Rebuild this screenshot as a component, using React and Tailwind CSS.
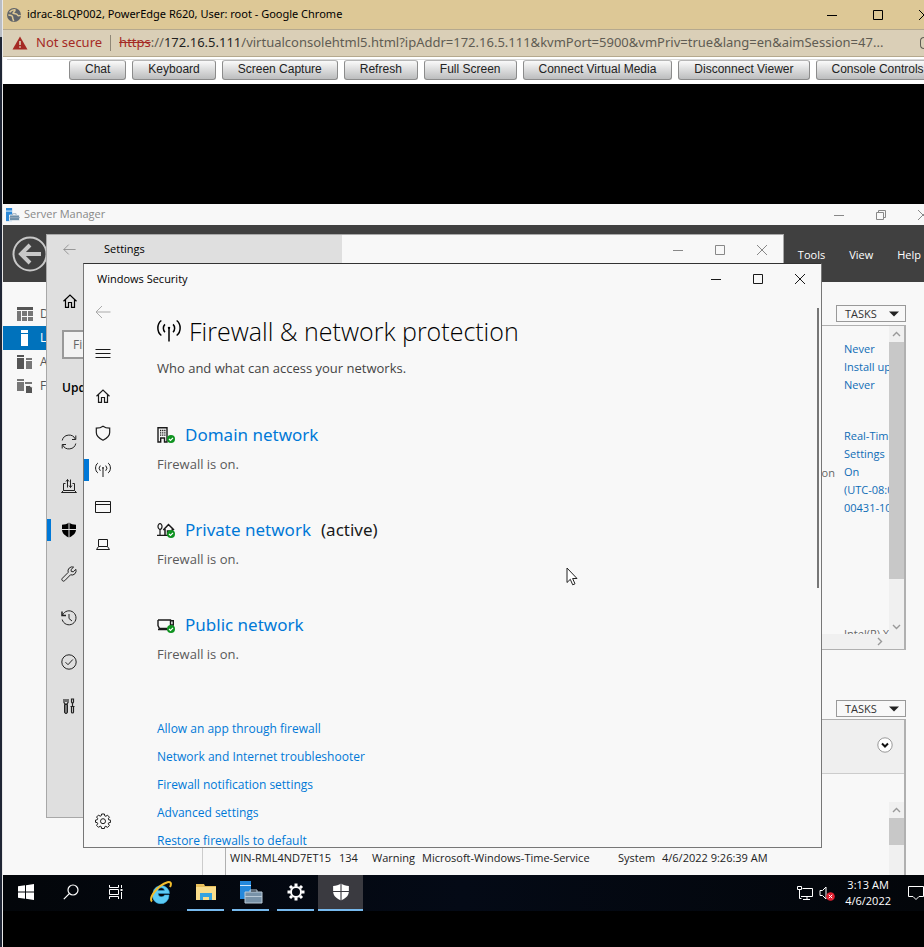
import React from "react";

const UI = "font-['Open_Sans','Noto_Sans',sans-serif]";

function Svg({ size = 16, box = 16, className = "", children, sw = 1 }) {
  return (
    <svg width={size} height={size} viewBox={`0 0 ${box} ${box}`} fill="none" stroke="currentColor" strokeWidth={sw} className={`shrink-0 ${className}`} aria-hidden="true">
      {children}
    </svg>
  );
}

const MinimizeIcon = () => <Svg size={12} box={12}><path d="M1 6.5h10" /></Svg>;
const MaximizeIcon = () => <Svg size={12} box={12}><path d="M1.5 1.5h9v9h-9z" /></Svg>;
const RestoreIcon = () => <Svg size={12} box={12}><path d="M1.5 3.5h7v7h-7zM3.5 3.5v-2h7v7h-2" /></Svg>;
const CloseIcon = () => <Svg size={12} box={12}><path d="M1 1l10 10M11 1L1 11" /></Svg>;
const BackIcon = ({ size = 16 }) => <Svg size={size}><path d="M15.5 8H1M7 2L1 8l6 6" /></Svg>;
const MenuIcon = () => <Svg><path d="M.5 4.500h15M.5 8.500h15M.5 12.500h15" /></Svg>;
const HomeIcon = () => <Svg sw={1.2}><path d="M1.500 8.200L8 2l6.500 6.200M3.500 6.500V14.400H6.500V9.500H9.500V14.400H12.500V6.500" /></Svg>;
const ShieldIcon = () => <Svg sw={1.2}><path d="M8 1.200C6.200 2.600 3.800 3.200 1.300 3.200V7.500C1.300 11 4.500 13.500 8 15.200C11.500 13.500 14.700 11 14.700 7.500V3.200C12.200 3.200 9.800 2.600 8 1.200z" /></Svg>;
const AntennaIcon = ({ size = 16 }) => (
  <Svg size={size}>
    <path d="M8 5.500v9.500M5.300 8.800a3.700 3.700 0 010-5.200M10.700 8.800a3.700 3.700 0 000-5.200M2.900 11C-.2 8.700-.2 3.300 2.900 1M13.100 11c3.100-2.300 3.100-7.700 0-10" />
    <circle cx="8" cy="5.900" r=".8" fill="currentColor" stroke="none" />
  </Svg>
);
const AppWindowIcon = () => <Svg><path d="M.5 2.500h15v11H.5zM.5 5.500h15" /></Svg>;
const LaptopIcon = () => <Svg><path d="M3.500 3.500h9v7h-9zM3.500 10.500L1.500 13.500h13L12.500 10.500" /></Svg>;
const GearIcon = () => (
  <Svg size={16}>
    <path d="M6.600 1h2.800l.4 1.900 1 .4 1.700-1.100 1.900 1.900-1.100 1.700.4 1 1.900.4v2.200l-1.900.4-.4 1 1.100 1.700-1.900 1.900-1.700-1.100-1 .4L9.400 15.500H6.600l-.4-1.900-1-.4-1.700 1.100-1.900-1.900 1.100-1.700-.4-1L.5 9.300V7.100l1.800-.4.4-1L1.600 4l1.900-1.900 1.700 1.100 1-.4z" />
    <circle cx="8" cy="8.200" r="2.500" />
  </Svg>
);
const SyncIcon = () => <Svg><path d="M1.200 6.500A7 7 0 0114.300 5M14.800 9.500A7 7 0 011.700 11M14.800 1.500V5.500H11M1.200 14.500V10.500H5" /></Svg>;
const DeliveryIcon = () => <Svg><path d="M4.500 5.500H2.500V12.500H13.500V5.500H11.500M2.500 12.500L.5 14.500H15.500L13.500 12.500M6.500 9.500V1.500M5 3.500L6.500 1.500M9.500 1.500V9.500M11 7.500L9.500 9.500M8 7.500L9.500 9.500M8 3.500L6.500 1.500" /></Svg>;
const SolidShieldIcon = ({ line = "#dfdfdf", size = 16 }) => (
  <Svg size={size}>
    <path fill="currentColor" stroke="none" d="M8 .5C6.200 2 3.400 2.700 1 2.700V7.500C1 11.500 4.500 14 8 15.500C11.500 14 15 11.500 15 7.500V2.700C12.600 2.700 9.800 2 8 .5z" />
    <path d="M8 0v16M0 7.500h16" stroke={line} />
  </Svg>
);
const WrenchIcon = () => <Svg><path d="M14.800 3.300L12.300 5.800L10.300 5.500L10 3.600L12.600 1.100A4.200 4.200 0 007.200 6.400L1.300 12.300A1.700 1.700 0 003.700 14.700L9.500 8.800A4.200 4.200 0 0014.800 3.300z" /></Svg>;
const HistoryIcon = () => <Svg><path d="M1.500 5.200A7 7 0 111.200 9.500M8 4v4.500L11 11" /><path d="M1 1.500V5.500H5" strokeWidth="1.500" /></Svg>;
const CheckCircleIcon = () => <Svg><circle cx="8" cy="8" r="7.200" /><path d="M4.500 8.200L7 10.700L11.800 5.500" /></Svg>;
const ToolsIcon = () => (
  <Svg>
    <path d="M3.500 6.500h3V14a1.500 1.500 0 01-3 0z" fill="#777" />
    <path d="M3 1v3.500l1 1.500h2l1-1.500V1M5 1v3M10.500 1h2v3l-1 1.500-1-1.500zM11.500 5.500v3M9.500 8.500h4M10.500 8.500V14a1 1 0 002 0V8.500" strokeWidth="1.200" />
  </Svg>
);

const Tick = () => (
  <>
    <circle cx="14" cy="13" r="4" fill="#0f9320" stroke="none" />
    <path d="M12 13l1.500 1.500L16 11.800" stroke="#fff" strokeWidth="1.200" />
  </>
);
const DomainIcon = () => (
  <Svg size={18} box={18}>
    <path d="M1 1.700h9V16H7.500V12H3.700v4H1z" strokeWidth="1.400" />
    <path d="M3 4.500h5.500M3 6.800h5.500M3 9.100h5.500" strokeDasharray="1.300 .8" strokeWidth="1.300" />
    <Tick />
  </Svg>
);
const PrivateIcon = () => (
  <Svg size={18} box={18} sw={1.2}>
    <path d="M3 14V8M0 14.400h12" />
    <ellipse cx="3" cy="5.500" rx="2" ry="2.800" />
    <path d="M6.300 9L11.500 3.500l5.500 5.500M8 8V14M15.300 7.500v3M10.500 14v-4h2.500" strokeWidth="1.500" />
    <Tick />
  </Svg>
);
const PublicIcon = () => (
  <Svg size={18} box={18} sw={1.4}>
    <path d="M1 4h12.500v5.500L12 12.500M1 4v5.500l1.500 3H10M13.500 4.700H16.300V9H13.500M1 13.500h10" />
    <Tick />
  </Svg>
);

function WindowControls({ className = "", restore = false }) {
  return (
    <div className={`flex shrink-0 ${className}`}>
      <button aria-label="Minimize" className="flex h-full w-[42px] items-center justify-center"><MinimizeIcon /></button>
      <button aria-label="Maximize" className="flex h-full w-[42px] items-center justify-center">{restore ? <RestoreIcon /> : <MaximizeIcon />}</button>
      <button aria-label="Close" className="flex h-full w-[42px] items-center justify-center"><CloseIcon /></button>
    </div>
  );
}

const consoleButtons = ["Chat", "Keyboard", "Screen Capture", "Refresh", "Full Screen", "Connect Virtual Media", "Disconnect Viewer", "Console Controls"];

function BrowserChrome() {
  return (
    <header className="overflow-hidden font-['Noto_Sans',sans-serif]">
      <div className="flex h-[29px] items-center bg-[#ddc896] pl-1 text-black">
        <Svg size={14} className="text-[#5f6368]">
          <circle cx="8" cy="8" r="8" fill="currentColor" stroke="none" />
          <path d="M3 5c2-3 4-3 6-3 1 2-2 2-2 4 2 1 4 0 5 2s3 0 3 1M1.500 8c3 0 5 1 5 3s1 2 1 4" stroke="#ddc896" strokeWidth="1.800" />
        </Svg>
        <h1 className="ml-[6px] flex-1 whitespace-nowrap text-[11px]">idrac-8LQP002, PowerEdge R620, User: root - Google Chrome</h1>
        <WindowControls className="-mr-[21px] gap-1 self-stretch" />
      </div>
      <div className="flex h-7 items-center border-y border-[#b5a98e] bg-[#dacfb7] pl-[9px] text-[13px]">
        <svg width="16" height="14" viewBox="0 0 16 14" className="shrink-0" aria-hidden="true">
          <path d="M8 .5L15.500 13.500H.5z" fill="#a52a25" />
          <path d="M8 5v4M8 10.200v1.600" stroke="#dacfb7" strokeWidth="1.600" />
        </svg>
        <span className="ml-2 whitespace-nowrap text-[#a52a25]">Not secure</span>
        <span className="ml-2 h-4 w-px shrink-0 bg-[#8f8776]" />
        <p className="ml-2 min-w-0 flex-1 whitespace-nowrap text-[#605c53]">
          <s className="text-[#a52a25]">https</s>://<span className="text-[#1f1f1f]">172.16.5.111</span>/virtualconsolehtml5.html?ipAddr=172.16.5.111&amp;kvmPort=5900&amp;vmPriv=true&amp;lang=en&amp;aimSession=47...
        </p>
        <span className="ml-2 h-3 w-1 shrink-0 rounded-l-sm border border-r-0 border-[#605c53]" />
      </div>
      <nav className="h-[27px] bg-white pl-1 pt-[2px]">
        <div className="flex gap-[6px] border-t border-[#d8d8d8] pl-[62px]">
          {consoleButtons.map((b) => (
            <button key={b} className="h-5 shrink-0 rounded-[3px] border border-[#8c8c8c] border-t-[#b5b5b5] bg-linear-to-b from-[#fafafa] to-[#bcbdbe] px-[15px] pb-[2px] font-['Liberation_Sans',Arial,sans-serif] text-[12px] leading-[16px] text-[#222]">
              {b}
            </button>
          ))}
        </div>
      </nav>
    </header>
  );
}

const serverNav = [
  { label: "Dashboard", icon: <Svg><path fill="#555" stroke="none" d="M0 1h16v3H0z" /><path fill="#777" stroke="none" d="M0 5h4v10H0zM5 5h5v5H5zM11 5h5v5h-5zM5 11h5v4H5zM11 11h5v4h-5z" /></Svg> },
  { label: "Local Server", active: true, icon: <Svg><path fill="#fff" stroke="none" d="M4 0h7v3H4zM4 4h7v12H4z" /></Svg> },
  { label: "All Servers", icon: <Svg><path fill="#555" stroke="none" d="M0 1h7v2H0zM0 4h7v11H0z" /><path fill="#777" stroke="none" d="M9 4h6v2H9zM9 7h6v8H9z" /></Svg> },
  { label: "Files", icon: <Svg><path fill="#777" stroke="none" d="M0 1h7v2H0zM0 4h7v9H0zM8 4h7v2H8z" /><path fill="#555" stroke="#f8f8f8" d="M8.500 7.500h4l3 2V15.500h-7z" /></Svg> },
];

function Scroll({ up, down, children }) {
  return (
    <div className="flex w-[15px] shrink-0 flex-col items-center bg-[#f0f0f0] text-[#999]">
      {up && <span className="flex h-4 items-center"><Svg size={9} box={9} sw={1.4}><path d="M1 6l3.500-3.500L8 6" /></Svg></span>}
      {children}
      {down && <span className="mt-auto flex h-4 items-center"><Svg size={9} box={9} sw={1.4}><path d="M1 3l3.500 3.500L8 3" /></Svg></span>}
    </div>
  );
}

function TasksButton() {
  return (
    <div className="flex justify-end">
      <button className="flex h-[17px] w-[70px] items-center justify-between border border-[#999] pl-2 pr-[6px] text-[11px] leading-[15px] text-[#333]">
        TASKS
        <Svg size={10} box={10}><path d="M0 2.500h10L5 7.500z" fill="#222" stroke="none" /></Svg>
      </button>
    </div>
  );
}

function ServerManager() {
  return (
    <section className="flex min-h-0 flex-1 flex-col overflow-hidden bg-[#f8f8f8]">
      <div className="-mr-5 flex h-[21px] items-center pl-[3px] text-[#888]">
        <Svg size={14}>
          <path d="M0 0h7v15H0z" fill="#2b88d8" stroke="none" /><path d="M0 3.500h7" stroke="#fff" />
          <path d="M4 8h11.500v6.500H4z" fill="#6f8fa8" stroke="#f8f8f8" /><path d="M7.500 8V6.500h4V8M4 11h12" stroke="#9ab" />
        </Svg>
        <span className="ml-1 flex-1 text-[11px]">Server Manager</span>
        <WindowControls restore className="h-full" />
      </div>
      <div className="flex h-[57px] items-center justify-between bg-[#404040] pl-[9px] pr-[3px] text-[11px] text-white">
        <button aria-label="Back" className="text-[#c8c8c8]">
          <Svg size={36} box={36} sw={2}><circle cx="18" cy="18" r="16.500" /><path d="M29 18H10M18 9l-9 9 9 9" strokeWidth="4" /></Svg>
        </button>
        <nav className="flex gap-6 pt-[3px]">
          <button>Tools</button><button>View</button><button>Help</button>
        </nav>
      </div>
      <div className="flex min-h-0 flex-1">
        <nav className="w-[199px] shrink-0 pt-5 text-[12px]">
          {serverNav.map((n) => (
            <a key={n.label} href="#" className={`flex h-6 items-center gap-[7px] pl-[14px] ${n.active ? "bg-[#0072bc] text-white" : "text-[#555]"}`}>
              {n.icon}{n.label}
            </a>
          ))}
        </nav>
        <div className="flex min-w-0 flex-1 flex-col border-l border-[#ccc] pl-[22px] pr-[18px] pt-[23px] text-[11px]">
          <TasksButton />
          <div className="mt-[3px] flex h-[325px] shrink-0 flex-col border border-r-2 border-[#b0b0b0]">
            <div className="flex min-h-0 flex-1">
              <div className="flex min-w-0 flex-1 justify-end gap-[9px] overflow-hidden pt-[14px] leading-[18px]">
                <span className="pt-[124px] text-[#666]">Configuration</span>
                <div className="w-[45px] shrink-0 overflow-hidden whitespace-nowrap text-[#0f6cb6]">
                  <a href="#" className="block">Never</a>
                  <a href="#" className="block">Install updates</a>
                  <a href="#" className="block">Never</a>
                  <a href="#" className="mt-[33px] block">Real-Time</a>
                  <a href="#" className="block">Settings</a>
                  <a href="#" className="block">On</a>
                  <a href="#" className="block">(UTC-08:00)</a>
                  <a href="#" className="block">00431-10000</a>
                  <span className="mt-[108px] block text-[#666]">Intel(R) Xeon</span>
                </div>
              </div>
              <Scroll up down><div className="h-[237px] w-full bg-[#c8c8c8]" /></Scroll>
            </div>
            <div className="flex h-[15px] shrink-0 items-center justify-end bg-[#f0f0f0] pr-5 text-[#999]">
              <Svg size={9} box={9} sw={1.4}><path d="M3 1l3.500 3.500L3 8" /></Svg>
            </div>
          </div>
          <div className="mt-[50px]"><TasksButton /></div>
          <div className="mt-[2px] flex min-h-0 flex-1 flex-col border border-b-0 border-r-2 border-[#b0b0b0]">
            <div className="flex h-[54px] shrink-0 items-center justify-end border-b border-[#ccc] bg-[#efefef] pb-1 pr-[11px]">
              <button aria-label="Expand filters"><Svg><circle cx="8" cy="8" r="7.200" fill="#fff" stroke="#999" /><path d="M5 6.500l3 3 3-3" stroke="#111" strokeWidth="2" /></Svg></button>
            </div>
            <div className="flex min-h-0 flex-1 pt-7">
              <div className="flex min-w-0 flex-1 items-end overflow-hidden pb-[9px] pl-1">
                <table className="whitespace-nowrap text-left text-[11px] leading-[17px] text-[#222]">
                  <tbody>
                    <tr>
                      <td className="w-[109px] p-0">WIN-RML4ND7ET15</td>
                      <td className="w-[33px] p-0">134</td>
                      <td className="w-[50px] p-0">Warning</td>
                      <td className="w-[196px] p-0">Microsoft-Windows-Time-Service</td>
                      <td className="w-[44px] p-0">System</td>
                      <td className="p-0">4/6/2022 9:26:39 AM</td>
                    </tr>
                  </tbody>
                </table>
              </div>
              <Scroll up><div className="h-[27px] w-full bg-[#c8c8c8]" /></Scroll>
            </div>
          </div>
        </div>
      </div>
    </section>
  );
}

const settingsNav = [
  ["Windows Update", <SyncIcon />], ["Delivery Optimization", <DeliveryIcon />], ["Windows Security", <SolidShieldIcon />],
  ["Troubleshoot", <WrenchIcon />], ["Recovery", <HistoryIcon />], ["Activation", <CheckCircleIcon />], ["For developers", <ToolsIcon />],
];

function SettingsWindow() {
  return (
    <section className="absolute left-[43px] top-[30px] flex h-[584px] w-[738px] flex-col overflow-hidden border border-[#a8a8a8] bg-[#f8f8f8] text-[#222]">
      <div className="flex h-[29px] shrink-0">
        <div className="flex w-[295px] items-center bg-[#dfdfdf] pl-4">
          <button aria-label="Back" className="text-[#888]"><BackIcon size={13} /></button>
          <span className="ml-7 text-[11px] text-black">Settings</span>
        </div>
        <WindowControls className="ml-auto text-[#888]" />
      </div>
      <div className="flex w-[295px] flex-1 flex-col bg-[#dfdfdf]">
        <a href="#" aria-label="Home" className="mt-[29px] pl-[15px] text-black"><HomeIcon /></a>
        <input aria-label="Find a setting" placeholder="Find a setting" className="ml-[15px] mt-[21px] h-[29px] w-[265px] border-2 border-[#999] bg-[#f2f2f2] px-[9px] text-[12px] placeholder:text-[#666]" />
        <h2 className="ml-[15px] mt-[19px] text-[12px] font-semibold leading-5 text-black">Update &amp; Security</h2>
        <nav className="mt-[22px]">
          {settingsNav.map(([label, icon], i) => (
            <a key={label} href="#" aria-label={label} className="flex h-11 items-center">
              <span className={`h-[22px] w-1 ${i === 2 ? "bg-[#0078d7]" : ""}`} />
              <span className={`ml-[10px] ${i === 2 ? "text-black" : "text-[#222]"}`}>{icon}</span>
            </a>
          ))}
        </nav>
      </div>
    </section>
  );
}

const securityNav = [
  ["Home", <HomeIcon />], ["Virus & threat protection", <ShieldIcon />], ["Firewall & network protection", <AntennaIcon />],
  ["App & browser control", <AppWindowIcon />], ["Device security", <LaptopIcon />],
];
const networks = [
  ["Domain network", "", <DomainIcon />], ["Private network", "(active)", <PrivateIcon />], ["Public network", "", <PublicIcon />],
];
const links = ["Allow an app through firewall", "Network and Internet troubleshooter", "Firewall notification settings", "Advanced settings", "Restore firewalls to default"];

function SecurityWindow() {
  return (
    <section className="absolute left-20 top-[59px] flex h-[585px] w-[739px] flex-col overflow-hidden border border-[#777] border-t-[#333] bg-[#f8f8f8] text-[#1a1a1a]">
      <div className="flex h-[30px] shrink-0 items-stretch justify-between pl-[13px]">
        <span className="self-center text-[11px] text-black">Windows Security</span>
        <WindowControls />
      </div>
      <div className="flex min-h-0 flex-1">
        <nav className="flex w-[38px] shrink-0 flex-col pb-2">
          <button aria-label="Back" className="flex h-9 items-center justify-center text-[#aaa]"><BackIcon /></button>
          <button aria-label="Menu" className="mb-px flex h-[46px] items-center justify-center"><MenuIcon /></button>
          {securityNav.map(([label, icon], i) => (
            <a key={label} href="#" aria-label={label} className="flex h-[37px] items-center">
              <span className={`h-[22px] w-[5px] ${i === 2 ? "bg-[#0078d7]" : ""}`} />
              <span className="ml-[6px]">{icon}</span>
            </a>
          ))}
          <a href="#" aria-label="Settings" className="mt-auto flex h-[37px] items-center justify-center"><GearIcon /></a>
        </nav>
        <main className="min-w-0 flex-1 overflow-hidden pl-[35px] pt-5">
          <h2 className="flex items-center gap-2 whitespace-nowrap text-[25px] font-light leading-[34px] text-black">
            <AntennaIcon size={24} />Firewall &amp; network protection
          </h2>
          <p className="mt-[10px] text-[13px] leading-5 text-[#444]">Who and what can access your networks.</p>
          <div className="mt-[43px] flex flex-col gap-[42px]">
            {networks.map(([name, note, icon]) => (
              <div key={name}>
                <h3 className="flex items-center font-['Noto_Sans',sans-serif] text-[17px] leading-7">
                  {icon}
                  <a href="#" className="ml-[10px] text-[#0078d7]">{name}</a>
                  {note && <span className="ml-[10px]">{note}</span>}
                </h3>
                <p className="mt-[5px] text-[13px] leading-5 text-[#5a5a5a]">Firewall is on.</p>
              </div>
            ))}
          </div>
          <ul className="mt-[55px] flex flex-col gap-2 text-[12px] leading-5 text-[#0078d7]">
            {links.map((l) => <li key={l}><a href="#">{l}</a></li>)}
          </ul>
        </main>
        <div className="mr-[2px] mt-[14px] h-[280px] w-[2px] shrink-0 bg-[#777]" />
      </div>
    </section>
  );
}

const taskItems = [
  ["Start", <Svg size={16}><path fill="#fff" stroke="none" d="M0 2.300L7 1.300V7.500H0zM8 1.200L16 0V7.500H8zM0 8.500H7V14.700L0 13.700zM8 8.500H16V16L8 14.800z" /></Svg>],
  ["Search", <Svg size={16} sw={1.2}><circle cx="10" cy="6" r="5" /><path d="M6.300 9.700L.8 15.200" /></Svg>],
  ["Task View", <Svg size={16}><path d="M1.500 1v2.500h9V1M1.500 5.500h9v5h-9zM1.500 15v-2.500h9V15M13.500 1v3M13.500 8v7" /><path d="M12.500 5h2v2h-2z" fill="#fff" stroke="none" /></Svg>],
  ["Internet Explorer", <Svg size={24} box={24}>
    <path d="M20.500 13.500H9a3.600 3.600 0 006.700 1.500H20A8.300 8.300 0 114 12.500a8.300 8.300 0 0116.500 1zM9 10.500h6.500a3.300 3.300 0 00-6.500 0z" fill="#5ccbf5" stroke="#2f9fd8" strokeWidth=".5" />
    <path d="M3 21.500C-.5 18.500 8 5.500 18.500 2.200c4-1 4 1.800 2.500 4.800" stroke="#f2bd2c" strokeWidth="2" />
  </Svg>],
  ["File Explorer", <Svg size={22} box={22}><path d="M1 3h8l1 2h11v14H1z" fill="#e8bf5a" stroke="none" /><path d="M1 6h20v13H1z" fill="#f9dd8b" stroke="none" /><path d="M5 19v-7h12v7h-3v-3H8v3z" fill="#35a3e0" stroke="none" /></Svg>, "run"],
  ["Server Manager", <Svg size={24} box={24}>
    <path d="M1 1h11v18H1z" fill="#2488dc" stroke="none" /><path d="M1 5.500h11" stroke="#cfe6fa" />
    <path d="M6 12h17v11H6z" fill="#7892a8" stroke="#b9cad8" /><path d="M11 12v-2h7v2M6 16.500h17" stroke="#b9cad8" />
  </Svg>, "run"],
  ["Settings", <Svg size={18} box={18} sw={2}>
    <circle cx="9" cy="9" r="5" /><path d="M9 .5v3M9 14.500v3M.5 9h3M14.500 9h3M3 3l2 2M13 13l2 2M15 3l-2 2M5 13l-2 2" strokeWidth="3" />
  </Svg>, "run"],
  ["Windows Security", <SolidShieldIcon line="#3a3a40" size={18} />, "active"],
];

function Taskbar() {
  return (
    <footer className="flex h-9 shrink-0 bg-linear-to-r from-[#03060a] via-[#040a16] to-[#03060a] text-white">
      {taskItems.map(([label, icon, state]) => (
        <button key={label} aria-label={label} className={`flex w-[45px] shrink-0 flex-col items-center ${state === "active" ? "bg-[#3a3a40]" : ""}`}>
          <span className="flex flex-1 items-center">{icon}</span>
          <span className={`h-[2px] ${state === "active" ? "w-full bg-[#76b9ed]" : state ? "w-[37px] bg-[#76b9ed]" : ""}`} />
        </button>
      ))}
      <div className="ml-auto flex items-center">
        <Svg><path d="M5.500 3.500h10v8H4M10 11.500v3M6 14.500h7M.5 1.500h4v3h-4zM2.500 4.500V13.500h2" /></Svg>
        <Svg className="ml-[6px]"><path d="M1 5.500h2.500L7 2v12L3.500 10.500H1z" /><circle cx="11.500" cy="11.500" r="4.300" fill="#e02030" stroke="none" /><path d="M9.800 9.800l3.400 3.400M13.200 9.800l-3.400 3.400" stroke="#fff" /></Svg>
        <p className="ml-[10px] text-center text-[11px] leading-4">3:13 AM<br />4/6/2022</p>
        <button aria-label="Notifications" className="ml-[17px]"><Svg><path d="M.5 1.500h15v10H11L8 14.500 5 11.500H.5z" /></Svg></button>
      </div>
    </footer>
  );
}

export default function App() {
  return (
    <div className={`flex min-h-screen overflow-hidden bg-black ${UI}`}>
      <div className="w-[2px] shrink-0 bg-linear-to-b from-[#b9bdc4] from-[37px] to-[#1f2635] to-[37px]" />
      <div className="flex min-w-0 flex-1 flex-col border-l border-[#e8e8e8]">
        <BrowserChrome />
        <div className="flex flex-1 flex-col bg-black pt-[120px] pb-9">
          <div className="relative flex h-[707px] flex-col overflow-hidden">
            <ServerManager />
            <Taskbar />
            <SettingsWindow />
            <SecurityWindow />
            <svg width="12" height="19" viewBox="0 0 12 19" className="absolute left-[563px] top-[363px]" aria-hidden="true">
              <path d="M1 1v14.500l3.300-3.200 2.400 5.500 2.300-1-2.400-5.300H11z" fill="#fff" stroke="#222" />
            </svg>
          </div>
        </div>
      </div>
    </div>
  );
}
